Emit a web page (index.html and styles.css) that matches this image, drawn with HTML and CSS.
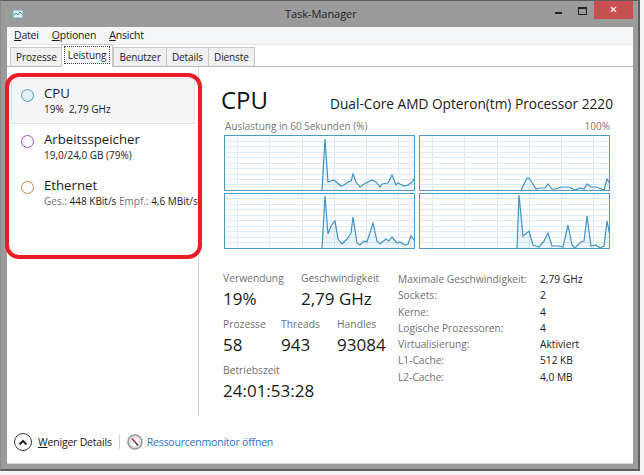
FILE: index.html
```html
<!DOCTYPE html>
<html lang="de">
<head>
<meta charset="utf-8">
<title>Task-Manager</title>
<link rel="stylesheet" href="styles.css">
</head>
<body>
<div class="window">
  <header class="titlebar">
    <svg class="appicon" width="14" height="12" viewBox="0 0 14 12"><rect x="3" y="1" width="10" height="8" fill="#dff1f8" stroke="#7fa3b5"/><path d="M4 6l2-2 2 2 2-3 2 2" fill="none" stroke="#2f8fc0"/><path d="M0 3h2M0 6h2M0 9h2" stroke="#6fae7a"/></svg>
    <div class="title">Task-Manager</div>
    <div class="controls">
      <span class="ctl-min"></span>
      <span class="ctl-max"></span>
      <span class="ctl-close">✕</span>
    </div>
  </header>
  <div class="client">
    <nav class="menubar">
      <span><u>D</u>atei</span><span><u>O</u>ptionen</span><span><u>A</u>nsicht</span>
    </nav>
    <div class="tabs">
      <span class="tab">Prozesse</span>
      <span class="tab active"><span class="focus">Leistung</span></span>
      <span class="tab">Benutzer</span>
      <span class="tab">Details</span>
      <span class="tab">Dienste</span>
    </div>
    <div class="content">
      <aside class="sidebar">
        <div class="item selected">
          <span class="dot dot-cpu"></span>
          <div><div class="item-name">CPU</div><div class="item-sub">19%&nbsp; 2,79 GHz</div></div>
        </div>
        <div class="item">
          <span class="dot dot-mem"></span>
          <div><div class="item-name">Arbeitsspeicher</div><div class="item-sub">19,0/24,0 GB (79%)</div></div>
        </div>
        <div class="item">
          <span class="dot dot-eth"></span>
          <div><div class="item-name">Ethernet</div><div class="item-sub"><span class="mute">Ges.:</span> 448 KBit/s <span class="mute">Empf.:</span> 4,6 MBit/s</div></div>
        </div>
      </aside>
      <main class="pane">
        <div class="heading">
          <h1>CPU</h1>
          <div class="model">Dual-Core AMD Opteron(tm) Processor 2220</div>
        </div>
        <div class="chart-head"><span>Auslastung in 60 Sekunden (%)</span><span>100%</span></div>
        <div class="charts">
          <div class="chart"><svg viewBox="0 0 190 55" width="190" height="55"><polygon class="area" points="97,54 100,3 103,46 109,44 116,50 119,49 123,46 126,45 128,38 131,46 135,51 139,48 147,44 151,46 155,51 157,48 163,47 167,39 171,49 173,47 179,50 183,49 187,46 190,42 190,55 97,55"/><polyline class="line" points="97,54 100,3 103,46 109,44 116,50 119,49 123,46 126,45 128,38 131,46 135,51 139,48 147,44 151,46 155,51 157,48 163,47 167,39 171,49 173,47 179,50 183,49 187,46 190,42"/></svg></div>
          <div class="chart"><svg viewBox="0 0 190 55" width="190" height="55"><polygon class="area" points="101,54 103,50 107,42 109,42 113,48 116,53 120,52 125,52 128,48 132,53 136,53 141,51 149,51 155,54 160,52 164,53 167,48 171,51 176,51 179,52 184,54 187,43 190,48 190,55 101,55"/><polyline class="line" points="101,54 103,50 107,42 109,42 113,48 116,53 120,52 125,52 128,48 132,53 136,53 141,51 149,51 155,54 160,52 164,53 167,48 171,51 176,51 179,52 184,54 187,43 190,48"/></svg></div>
          <div class="chart"><svg viewBox="0 0 190 55" width="190" height="55"><polygon class="area" points="97,54 100,2 103,40 106,32 110,27 113,45 117,50 122,45 126,39 128,23 132,49 135,51 139,47 142,48 148,29 152,47 155,50 161,45 164,47 167,43 172,49 175,48 180,51 183,50 186,42 190,47 190,55 97,55"/><polyline class="line" points="97,54 100,2 103,40 106,32 110,27 113,45 117,50 122,45 126,39 128,23 132,49 135,51 139,47 142,48 148,29 152,47 155,50 161,45 164,47 167,43 172,49 175,48 180,51 183,50 186,42 190,47"/></svg></div>
          <div class="chart"><svg viewBox="0 0 190 55" width="190" height="55"><polygon class="area" points="97,54 99,1 103,42 109,37 113,51 119,53 124,47 128,39 132,52 139,52 143,53 148,31 152,51 155,54 161,48 164,47 167,22 171,52 176,51 180,54 184,52 187,27 190,42 190,55 97,55"/><polyline class="line" points="97,54 99,1 103,42 109,37 113,51 119,53 124,47 128,39 132,52 139,52 143,53 148,31 152,51 155,54 161,48 164,47 167,22 171,52 176,51 180,54 184,52 187,27 190,42"/></svg></div>
        </div>
        <div class="details">
          <div class="stats">
            <div class="stat-row">
              <div class="stat s78"><div class="label">Verwendung</div><div class="value">19%</div></div>
              <div class="stat"><div class="label">Geschwindigkeit</div><div class="value">2,79 GHz</div></div>
            </div>
            <div class="stat-row">
              <div class="stat s58"><div class="label">Prozesse</div><div class="value">58</div></div>
              <div class="stat s56"><div class="label">Threads</div><div class="value">943</div></div>
              <div class="stat"><div class="label">Handles</div><div class="value">93084</div></div>
            </div>
            <div class="stat-row">
              <div class="stat"><div class="label">Betriebszeit</div><div class="value">24:01:53:28</div></div>
            </div>
          </div>
          <dl class="info">
            <dt>Maximale Geschwindigkeit:</dt><dd>2,79 GHz</dd>
            <dt>Sockets:</dt><dd>2</dd>
            <dt>Kerne:</dt><dd>4</dd>
            <dt>Logische Prozessoren:</dt><dd>4</dd>
            <dt>Virtualisierung:</dt><dd>Aktiviert</dd>
            <dt>L1-Cache:</dt><dd>512 KB</dd>
            <dt>L2-Cache:</dt><dd>4,0 MB</dd>
          </dl>
        </div>
      </main>
    </div>
    <footer class="footer">
      <span class="collapse"><svg width="10" height="7" viewBox="0 0 10 7"><path d="M1.5 5.5L5 2l3.5 3.5" fill="none" stroke="#222" stroke-width="2"/></svg></span>
      <span class="less"><u>W</u>eniger Details</span>
      <span class="sep"></span>
      <svg class="gauge" width="16" height="16" viewBox="0 0 16 16"><circle cx="8" cy="8" r="7" fill="#e6e6e6" stroke="#999" stroke-width="1.6"/><circle cx="8" cy="8" r="4.8" fill="#fff" stroke="#d5d5d5"/><path d="M5 4.5L8 8" stroke="#c8242b" stroke-width="1.6"/><path d="M8 8l3 3.5" stroke="#333" stroke-width="1.4"/></svg>
      <a class="link">Ressourcenmonitor öffnen</a>
    </footer>
  </div>
  <div class="annotation"></div>
</div>
</body>
</html>
```
FILE: styles.css
```css
* { box-sizing: border-box; }
html, body { margin: 0; padding: 0; }
body {
  width: 644px;
  height: 475px;
  background: #f4f4f4;
  font-family: "Open Sans", "Noto Sans", sans-serif;
  color: #1a1a1a;
  overflow: hidden;
}
.window {
  position: relative;
  width: 640px;
  height: 471px;
  background: #9b9b9b;
  border: 1px solid #5e5e5e;
  border-left-color: #8a8a8a;
  border-width: 1px 2px 2px 1px;
  display: flex;
  flex-direction: column;
  padding: 0 5px 6px 6px;
}
.titlebar {
  position: relative;
  height: 26px;
  flex: none;
  display: flex;
  align-items: flex-start;
}
.appicon { margin: 8px 0 0 3px; }
.title {
  position: absolute;
  left: 278px;
  top: 5px;
  font-size: 11px;
  letter-spacing: -0.05px;
  line-height: 16px;
  color: #222;
}
.controls {
  margin-left: auto;
  display: flex;
  align-items: flex-start;
}
.ctl-min { width: 7px; height: 2px; background: #222; margin: 11px 16px 0 0; }
.ctl-max { width: 9px; height: 8px; border: 1px solid #222; border-top-width: 2px; margin: 6px 7px 0 0; }
.ctl-close {
  width: 39px;
  height: 18px;
  background: #c75050;
  color: #fff;
  font-size: 10px;
  font-weight: 700;
  line-height: 18px;
  text-align: center;
  font-family: "DejaVu Sans", sans-serif;
}
.client {
  flex: 1;
  background: #fff;
  display: flex;
  flex-direction: column;
  min-height: 0;
  box-shadow: 0 1px 0 #d8d8d8;
}
.menubar {
  height: 18px;
  flex: none;
  background: #f5f6f7;
  border-bottom: 1px solid #e8e8e8;
  display: flex;
  gap: 13px;
  padding-left: 7px;
  font-size: 10.5px;
  letter-spacing: -0.2px;
  line-height: 17px;
}
.tabs {
  height: 22px;
  flex: none;
  display: flex;
  align-items: flex-end;
  padding-left: 3px;
  border-bottom: 1px solid #b9b9b9;
  position: relative;
  font-size: 10px;
  letter-spacing: -0.1px;
}
.tab {
  height: 19px;
  padding: 0 5px;
  line-height: 18px;
  background: #f0f0f0;
  border: 1px solid #c9c9c9;
  border-bottom: none;
  margin-right: -1px;
  color: #222;
}
.tab.active {
  height: 23px;
  background: #fff;
  padding: 1px 2px 0;
  margin: 0 0 0 -1px;
  position: relative;
  top: 1px;
  line-height: 17px;
}
.focus {
  display: block;
  border: 1px dotted #444;
  padding: 0 3px;
  height: 18px;
}
.content {
  flex: 1;
  display: flex;
  min-height: 0;
}
.sidebar {
  width: 192px;
  flex: none;
  border-right: 1px solid #d4d4d4;
  padding-top: 11px;
  overflow: hidden;
  height: 349px;
}
.item {
  display: flex;
  height: 46px;
  padding: 6px 0 0 14px;
  gap: 10px;
  white-space: nowrap;
}
.item.selected {
  height: 46px;
  margin: 0 3px 0 4px;
  padding: 5px 0 0 9px;
  background: #f5f5f5;
  border: 1px solid #e2e2e2;
}
.dot {
  width: 13px;
  height: 13px;
  border-radius: 50%;
  border: 1.5px solid;
  margin-top: 5px;
  flex: none;
  background: #fff;
}
.dot-cpu { border-color: #4f9ad0; background: #e4f0f8; }
.dot-mem { border-color: #a94fc4; }
.dot-eth { border-color: #c58245; }
.item-name { font-size: 13.2px; line-height: 18px; }
.item-sub { font-size: 10px; line-height: 14px; }
.mute { color: #707070; }
.pane {
  flex: 1;
  padding: 16px 20px 0 22px;
  min-width: 0;
}
.heading {
  display: flex;
  justify-content: space-between;
  align-items: baseline;
}
h1 {
  margin: 0;
  font-size: 24px;
  font-weight: 400;
  line-height: 34px;
  color: #111;
}
.model { font-size: 13.7px; color: #1a1a1a; }
.chart-head {
  display: flex;
  justify-content: space-between;
  font-size: 10px;
  line-height: 14px;
  color: #777;
  margin: 2px 3px 2px 4px;
}
.charts {
  display: grid;
  grid-template-columns: 191px 191px;
  grid-auto-rows: 56px;
  gap: 2px 4px;
  margin-left: 3px;
}
.chart {
  border: 1px solid #4a9acb;
  background-color: #fff;
  background-image:
    repeating-linear-gradient(to bottom, transparent 0 4.5px, #dcebf5 4.5px 5.5px),
    repeating-linear-gradient(to right, transparent 0 12px, #dcebf5 12px 13px, transparent 13px 32.3px);
  overflow: hidden;
}
.chart svg { display: block; }
.area { fill: #4a9acb; fill-opacity: 0.1; stroke: none; }
.line { fill: none; stroke: #3f93c6; stroke-width: 1.2; }
.details {
  display: flex;
  margin-top: 22px;
  margin-left: 2px;
}
.stats { width: 175px; flex: none; }
.stat-row { display: flex; height: 46px; }
.s78 { width: 78px; }
.s58 { width: 58px; }
.s56 { width: 56px; }
.label { font-size: 10.3px; line-height: 14px; color: #707070; white-space: nowrap; }
.value { font-size: 17px; line-height: 27px; color: #1a1a1a; white-space: nowrap; }
.info {
  margin: 0;
  display: grid;
  grid-template-columns: 142px 1fr;
  grid-auto-rows: 16.3px;
  font-size: 10.2px;
  line-height: 16px;
}
.info dt { color: #707070; white-space: nowrap; }
.info dd { margin: 0; }
.footer {
  height: 47px;
  flex: none;
  display: flex;
  align-items: center;
  padding: 5px 0 0 7px;
  font-size: 10.5px;
  letter-spacing: -0.2px;
}
.collapse {
  width: 18px;
  height: 18px;
  border-radius: 50%;
  border: 1.5px solid #333;
  display: flex;
  align-items: center;
  justify-content: center;
  margin-right: 6px;
}
.sep { width: 1px; height: 14px; background: #cfcfcf; margin: 0 7px; }
.gauge { margin-right: 4px; }
.link { color: #2f6fd0; }
.annotation {
  position: absolute;
  left: 4px;
  top: 72px;
  width: 197px;
  height: 186px;
  border: 4px solid #ee1c25;
  border-radius: 14px;
}
```
